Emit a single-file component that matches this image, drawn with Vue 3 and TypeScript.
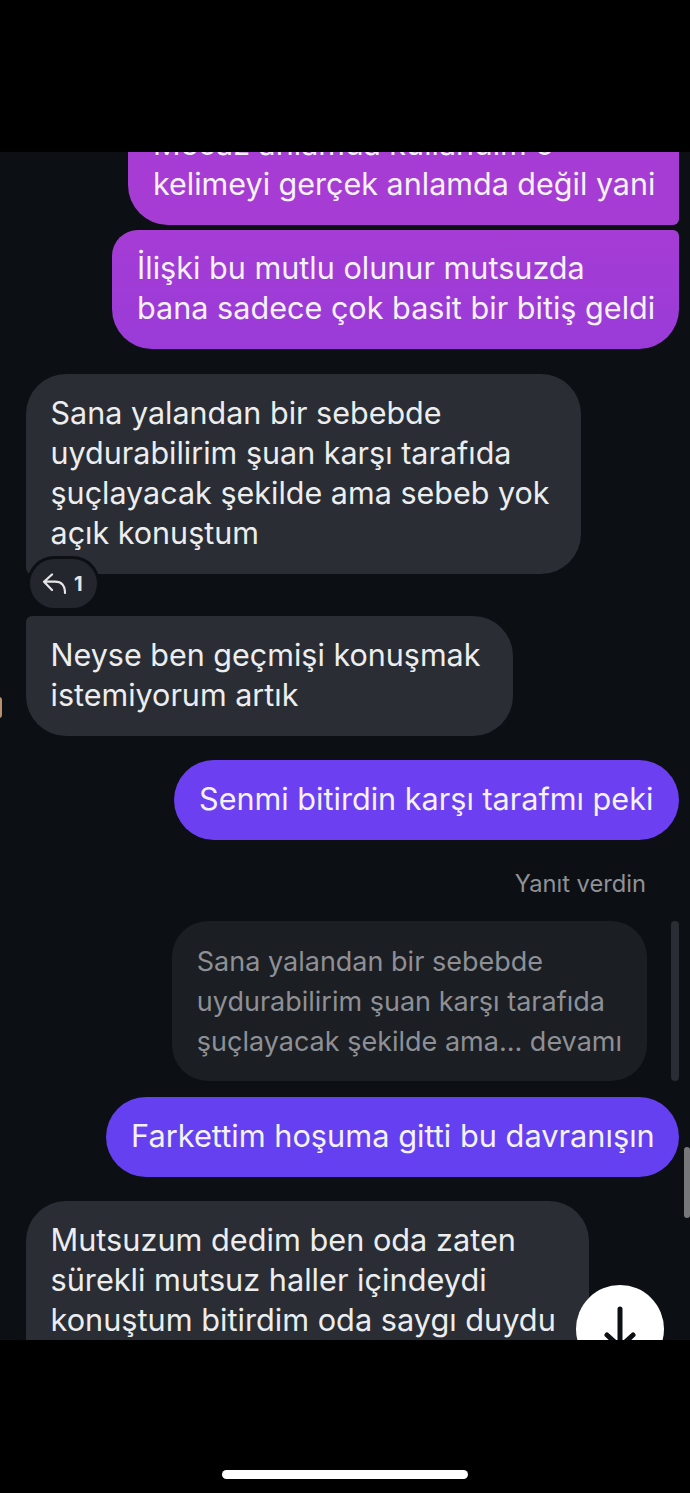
<script setup lang="ts">
const replyText = [
  'Sana yalandan bir sebebde',
  'uydurabilirim şuan karşı tarafıda',
  'şuçlayacak şekilde ama... devamı',
]
</script>

<template>
  <div class="screen">
    <div class="top-bar"></div>

    <main class="chat">
      <div class="thread">
        <div class="bubble mine first">Mecaz anlamda kullandım o<br />kelimeyi gerçek anlamda değil yani</div>
        <div class="bubble mine second">İlişki bu mutlu olunur mutsuzda<br />bana sadece çok basit bir bitiş geldi</div>

        <div class="bubble theirs long">
          Sana yalandan bir sebebde<br />uydurabilirim şuan karşı tarafıda<br />şuçlayacak şekilde ama sebeb yok<br />açık konuştum
        </div>
        <div class="reaction">
          <svg width="24" height="22" viewBox="0 0 24 22" fill="none" stroke="#e4e5e7" stroke-width="2.2" stroke-linecap="round" stroke-linejoin="round">
            <path d="M10 1.5 L2 8.7 L10 17 M2 8.7 H13 Q23 8.7 23 20" />
          </svg>
          <span>1</span>
        </div>
        <div class="bubble theirs short">Neyse ben geçmişi konuşmak<br />istemiyorum artık</div>

        <div class="bubble mine violet">Senmi bitirdin karşı tarafmı peki</div>

        <div class="reply-label">Yanıt verdin</div>
        <div class="reply-row">
          <div class="reply-quote">
            <div v-for="line in replyText" :key="line">{{ line }}</div>
          </div>
          <div class="reply-line"></div>
        </div>
        <div class="bubble mine indigo">Farkettim hoşuma gitti bu davranışın</div>

        <div class="bubble theirs last">
          Mutsuzum dedim ben oda zaten<br />sürekli mutsuz haller içindeydi<br />konuştum bitirdim oda saygı duydu
        </div>
      </div>

      <div class="avatar-edge"></div>
      <div class="scroll-thumb"></div>
      <button class="down-btn" aria-label="En alta git">
        <svg width="88" height="88" viewBox="0 0 88 88" fill="none" stroke="#0c0f14" stroke-width="5" stroke-linecap="round" stroke-linejoin="round">
          <path d="M44 24 V62 M31 50 L44 62 L57 50" />
        </svg>
      </button>
    </main>

    <div class="bottom-bar">
      <div class="home-indicator"></div>
    </div>
  </div>
</template>

<style scoped>
.screen {
  width: 690px;
  height: 1493px;
  display: flex;
  flex-direction: column;
  background: #000;
  font-family: Inter, Roboto, "Liberation Sans", sans-serif;
  overflow: hidden;
}

.top-bar {
  height: 152px;
  flex: none;
}

.chat {
  position: relative;
  height: 1188px;
  flex: none;
  background: #0c0f14;
  overflow: hidden;
}

.thread {
  display: flex;
  flex-direction: column;
  margin-top: -48px;
}

.bubble {
  box-sizing: border-box;
  font-size: 30.5px;
  line-height: 40px;
  padding: 19px 25px 21px;
  color: #f4f2f8;
  white-space: nowrap;
  border-radius: 40px;
}

.mine {
  align-self: flex-end;
  margin-right: 11px;
}

.first {
  width: 551px;
  height: 121px;
  padding-top: 20px;
  background: #a63cd3;
  border-radius: 40px 6px 6px 40px;
}

.second {
  width: 567px;
  height: 119px;
  padding-top: 18px;
  font-size: 30.6px;
  background: linear-gradient(#a53cd4, #9a3bd9);
  border-radius: 26px 6px 40px 40px;
  margin-top: 5px;
}

.theirs {
  align-self: flex-start;
  margin-left: 26px;
  padding-left: 24.5px;
  background: #2a2d34;
  color: #ecedef;
}

.long {
  width: 555px;
  margin-top: 25px;
  border-bottom-left-radius: 6px;
}

.reaction {
  position: relative;
  align-self: flex-start;
  margin: -15px 0 8px 30px;
  width: 67px;
  height: 49px;
  box-sizing: border-box;
  padding-left: 12px;
  display: flex;
  align-items: center;
  gap: 8px;
  background: #23262c;
  border-radius: 25px;
  box-shadow: 0 0 0 3px #0c0f14;
  color: #e4e5e7;
  font-size: 20px;
  font-weight: 700;
}

.short {
  width: 487px;
  border-top-left-radius: 6px;
}

.violet {
  width: 505px;
  margin-top: 24px;
  font-size: 30.6px;
  background: #6c3ff0;
}

.reply-label {
  align-self: flex-end;
  margin: 29px 44px 0 0;
  font-size: 23.7px;
  line-height: 30px;
  color: #8f9196;
}

.reply-row {
  align-self: flex-end;
  margin: 22px 11px 0 0;
  display: flex;
  gap: 24px;
}

.reply-quote {
  padding: 21px 25px 19px;
  background: #1b1e23;
  border-radius: 36px;
  color: #8e9096;
  font-size: 27px;
  line-height: 40px;
  white-space: nowrap;
}

.reply-line {
  width: 8px;
  background: #2a2d34;
  border-radius: 4px;
}

.indigo {
  width: 573px;
  margin-top: 16px;
  font-size: 30.75px;
  background: #6440f1;
}

.last {
  margin-top: 24px;
  width: 563px;
  height: 260px;
  font-size: 30.7px;
}

.avatar-edge {
  position: absolute;
  left: -4px;
  top: 545px;
  width: 6px;
  height: 21px;
  border-radius: 3px;
  background: #b98f6c;
}

.scroll-thumb {
  position: absolute;
  right: 0;
  top: 995px;
  width: 6px;
  height: 71px;
  border-radius: 3px;
  background: #77787a;
}

.down-btn {
  position: absolute;
  right: 26px;
  top: 1133px;
  width: 88px;
  height: 88px;
  padding: 0;
  border: none;
  border-radius: 50%;
  background: #fff;
}

.down-btn svg {
  display: block;
}

.bottom-bar {
  flex: 1;
  display: flex;
  flex-direction: column;
  justify-content: flex-end;
  align-items: center;
  padding-bottom: 14px;
}

.home-indicator {
  width: 246px;
  height: 9px;
  border-radius: 5px;
  background: #fff;
}
</style>
